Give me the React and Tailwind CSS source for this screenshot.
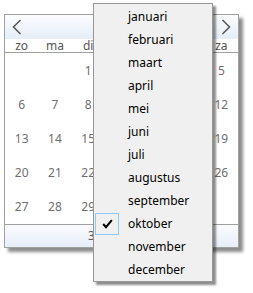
import React from "react";

const dayNames = ["zo", "ma", "di", "wo", "do", "vr", "za"];
const weeks = [
  ["", "", "1", "2", "3", "4", "5"],
  ["6", "7", "8", "9", "10", "11", "12"],
  ["13", "14", "15", "16", "17", "18", "19"],
  ["20", "21", "22", "23", "24", "25", "26"],
  ["27", "28", "29", "30", "31", "", ""],
];
const months = [
  "januari", "februari", "maart", "april", "mei", "juni",
  "juli", "augustus", "september", "oktober", "november", "december",
];

function Chevron({ dir }) {
  return (
    <svg width="10" height="16" viewBox="0 0 10 16">
      <polyline
        points={dir === "left" ? "8.5,1 1.5,8 8.5,15" : "1.5,1 8.5,8 1.5,15"}
        fill="none"
        stroke="#5a5a5a"
        strokeWidth="1.6"
      />
    </svg>
  );
}

export default function App() {
  return (
    <div
      className="relative w-[253px] h-[293px] bg-white overflow-hidden"
      style={{ fontFamily: '"Noto Sans", "Open Sans", sans-serif' }}
    >
      {/* calendar */}
      <div className="ml-[4px] mt-[14px] w-[235px] h-[234px] flex flex-col border border-[#a0a0a0] bg-white shadow-[4px_4px_3px_rgba(0,0,0,0.45)]">
        <div className="h-[24px] flex items-center justify-between px-[7px] bg-gradient-to-b from-[#fbfcfe] to-[#e6edf8]">
          <Chevron dir="left" />
          <Chevron dir="right" />
        </div>
        <div className="h-[14px] grid grid-cols-7 border-b border-[#a0a0a0] text-[12px] leading-[13px] text-[#555]">
          {dayNames.map((d) => (
            <div key={d} className="text-center">{d}</div>
          ))}
        </div>
        <div className="flex-1 flex flex-col pt-[1px]">
          {weeks.map((w, i) => (
            <div key={i} className="h-[34px] grid grid-cols-7 items-center text-[12px] text-[#6e6e6e]">
              {w.map((n, j) => (
                <div key={j} className="text-center">{n}</div>
              ))}
            </div>
          ))}
        </div>
        <div className="h-[23px] border-t border-[#a0a0a0] bg-gradient-to-b from-[#fafbfd] to-[#e8eef8] flex items-center pl-[83px] text-[12px] text-[#555]">
          30-10-2013
        </div>
      </div>

      {/* month menu */}
      <div className="absolute left-[93px] top-[3px] w-[120px] h-[279px] border border-[#979797] bg-[#f0f0f0] py-[1px] shadow-[3px_3px_2px_rgba(0,0,0,0.45)]">
        {months.map((m) => (
          <div key={m} className="h-[23px] flex items-center text-[12px] text-black">
            <div className="w-[34px] pl-[1px] flex items-center">
              {m === "oktober" && (
                <div className="w-[24px] h-[22px] border border-[#90c8f6] flex items-center justify-center">
                  <svg width="11" height="10" viewBox="0 0 11 10">
                    <polyline points="1.2,5 4,8.2 9.8,1.2" fill="none" stroke="#000" strokeWidth="2" />
                  </svg>
                </div>
              )}
            </div>
            <span>{m}</span>
          </div>
        ))}
      </div>
    </div>
  );
}
